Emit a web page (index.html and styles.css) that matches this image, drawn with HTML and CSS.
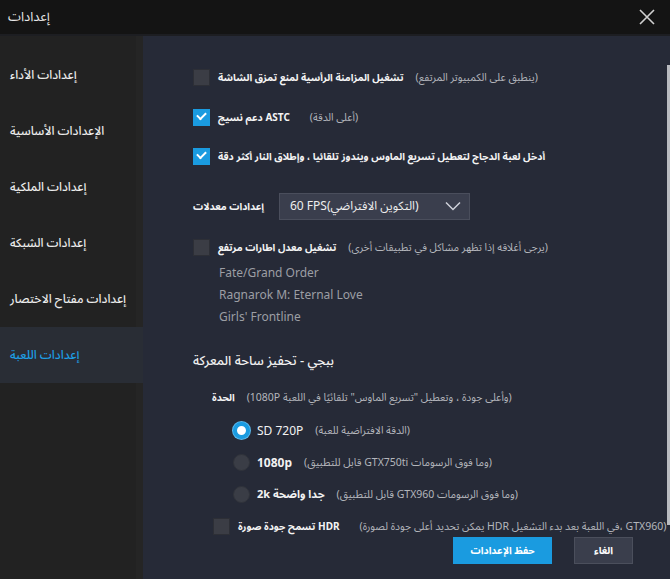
FILE: index.html
```html
<!DOCTYPE html>
<html lang="ar">
<head>
    <meta charset="UTF-8">
    <title>إعدادات</title>
    <link rel="stylesheet" href="styles.css">
</head>
<body>
    <div id="window">
        <div id="titlebar">
            <span class="title">إعدادات</span>
            <svg class="close" width="16" height="16" viewBox="0 0 16 16">
                <path d="M1 1 L15 15 M15 1 L1 15" stroke="#d0d0d0" stroke-width="1.6" fill="none"/>
            </svg>
        </div>

        <div id="body">
            <div id="sidebar">
                <div class="nav-item">إعدادات الأداء</div>
                <div class="nav-item">الإعدادات الأساسية</div>
                <div class="nav-item">إعدادات الملكية</div>
                <div class="nav-item">إعدادات الشبكة</div>
                <div class="nav-item">إعدادات مفتاح الاختصار</div>
                <div class="nav-item active">إعدادات اللعبة</div>
            </div>

            <div id="content">
                <div class="row row-vsync">
                    <span class="check"></span>
                    <span class="label ar">تشغيل المزامنة الرأسية لمنع تمزق الشاشة</span>
                    <span class="note ar">(ينطبق على الكمبيوتر المرتفع)</span>
                </div>

                <div class="row row-astc">
                    <span class="check on"></span>
                    <span class="label ar">ASTC دعم نسيج</span>
                    <span class="note ar wide">(أعلى الدقة)</span>
                </div>

                <div class="row row-mouse">
                    <span class="check on"></span>
                    <span class="label ar">أدخل لعبة الدجاج لتعطيل تسريع الماوس ويندوز تلقائيا ، وإطلاق النار أكثر دقة</span>
                </div>

                <div class="row row-fps">
                    <span class="label ar">إعدادات معدلات</span>
                    <div class="select">
                        <span>60 FPS(التكوين الافتراضي)</span>
                        <svg width="16" height="10" viewBox="0 0 16 10">
                            <path d="M1 1.5 L8 8.5 L15 1.5" stroke="#cfd2da" stroke-width="1.5" fill="none"/>
                        </svg>
                    </div>
                </div>

                <div class="row row-hfr">
                    <span class="check"></span>
                    <span class="label ar">تشغيل معدل اطارات مرتفع</span>
                    <span class="note ar">(يرجى أغلاقه إذا تظهر مشاكل في تطبيقات أخرى)</span>
                </div>

                <ul class="games">
                    <li>Fate/Grand Order</li>
                    <li>Ragnarok M: Eternal Love</li>
                    <li>Girls' Frontline</li>
                </ul>

                <div class="section-title ar">ببجي - تحفيز ساحة المعركة</div>

                <div class="row row-sharp">
                    <span class="label ar">الحدة</span>
                    <span class="note ar">(وأعلى جودة ، وتعطيل "تسريع الماوس" تلقائيًا في اللعبة 1080P)</span>
                </div>

                <div class="row radio-row first">
                    <span class="radio on"></span>
                    <span class="opt">SD 720P</span>
                    <span class="note ar">(الدقة الافتراضية للعبة)</span>
                </div>

                <div class="row radio-row">
                    <span class="radio"></span>
                    <span class="opt bold">1080p</span>
                    <span class="note ar">(وما فوق الرسومات GTX750ti قابل للتطبيق)</span>
                </div>

                <div class="row radio-row">
                    <span class="radio"></span>
                    <span class="opt bold ar">جدا واضحة 2k</span>
                    <span class="note ar">(وما فوق الرسومات GTX960 قابل للتطبيق)</span>
                </div>

                <div class="row row-hdr">
                    <span class="check"></span>
                    <span class="label ar">HDR تسمح جودة صورة</span>
                    <span class="note ar wide">(GTX960 ،في اللعبة بعد بدء التشغيل HDR يمكن تحديد أعلى جودة لصورة)</span>
                </div>

                <div class="buttons">
                    <button class="btn primary">حفظ الإعدادات</button>
                    <button class="btn">الغاء</button>
                </div>

                <div class="scroll-thumb"></div>
            </div>
        </div>
    </div>
</body>
</html>
```

FILE: styles.css
```css
body {
    margin: 0;
    padding: 0;
    background-color: #262a37;
    font-family: "Noto Sans", "Noto Sans Arabic", "DejaVu Sans", sans-serif;
    color: #fff;
}

#window {
    width: 670px;
    height: 579px;
    overflow: hidden;
    display: flex;
    flex-direction: column;
}

#titlebar {
    height: 34px;
    background-color: #141414;
    border-bottom: 2px solid #1d1e22;
    display: flex;
    align-items: center;
    justify-content: space-between;
    padding: 0 15px 0 8px;
    flex-shrink: 0;
}

#titlebar .title {
    font-size: 13px;
    color: #e8e8e8;
}

#body {
    flex: 1;
    display: flex;
    min-height: 0;
}

#sidebar {
    width: 143px;
    background: linear-gradient(to right, #222222 136px, #252525 136px);
    padding-top: 11px;
    flex-shrink: 0;
}

.nav-item {
    height: 56px;
    line-height: 56px;
    padding-left: 10px;
    font-size: 12px;
    font-weight: 500;
    color: #ececec;
    white-space: nowrap;
}

.nav-item.active {
    background-color: #292d35;
    color: #1e9fe6;
}

#content {
    flex: 1;
    position: relative;
    padding: 33px 0 0 50px;
    overflow: hidden;
}

.row {
    display: flex;
    align-items: center;
    height: 17px;
    white-space: nowrap;
}

.ar {
    direction: rtl;
    unicode-bidi: isolate;
}

.label {
    font-size: 10px;
    font-weight: bold;
    color: #f4f4f4;
    margin-left: 8px;
}

.note {
    font-size: 10.5px;
    color: #b4b6bc;
    margin-left: 12px;
}

.note.wide { margin-left: 20px; }

.check {
    width: 15px;
    height: 15px;
    background-color: #3b3d45;
    border: 1px solid #2d2f36;
    flex-shrink: 0;
    position: relative;
}

.check.on {
    background-color: #1a9be0;
    border-color: #1a9be0;
}

.check.on::after {
    content: "";
    position: absolute;
    left: 3px;
    top: 2px;
    width: 7px;
    height: 4px;
    border-left: 2px solid #fff;
    border-bottom: 2px solid #fff;
    transform: rotate(-45deg);
}

.row-astc { margin-top: 23px; }
.row-mouse { margin-top: 22px; }
.row-fps { margin-top: 28px; height: 26px; }
.row-fps .label { margin-left: 0; width: 86px; text-align: left; }
.row-hfr { margin-top: 20px; }

.select {
    width: 191px;
    height: 27px;
    background-color: #3a3e4d;
    border: 1px solid #4a4e5c;
    display: flex;
    align-items: center;
    justify-content: space-between;
    padding: 0 8px 0 10px;
    font-size: 12px;
    color: #eee;
    box-sizing: border-box;
}

.games {
    list-style: none;
    margin: 6px 0 0 26px;
    padding: 0;
}

.games li {
    line-height: 22px;
    font-size: 12px;
    color: #9c9ea4;
}

.section-title {
    margin-top: 23px;
    font-size: 13px;
    font-weight: 500;
    color: #f0f0f0;
    line-height: 18px;
    width: fit-content;
}

.row-sharp {
    margin-top: 20px;
    padding-left: 19px;
}

.row-sharp .label { margin-left: 0; }

.radio-row {
    margin-top: 15px;
    padding-left: 40px;
}

.radio-row.first { margin-top: 16px; }

.radio {
    width: 17px;
    height: 17px;
    border-radius: 50%;
    background-color: #3a3d46;
    border: 1px solid #30333b;
    box-sizing: border-box;
    flex-shrink: 0;
}

.radio.on {
    background-color: #fff;
    border: 4px solid #1a9be0;
    box-shadow: 0 0 0 1px #5ab8ec;
}

.opt {
    font-size: 12px;
    color: #f2f2f2;
    margin-left: 7px;
}

.opt.bold { font-weight: bold; }
.opt.ar { font-size: 11px; }

.row-hdr {
    margin-top: 15px;
    padding-left: 20px;
}

.buttons {
    display: flex;
    gap: 22px;
    margin: 2px 0 0 260px;
}

.btn {
    height: 27px;
    width: 59px;
    font-family: inherit;
    font-size: 10px;
    font-weight: bold;
    color: #fff;
    background-color: #3a3e4c;
    border: 1px solid #4b4f5c;
    padding: 0;
}

.btn.primary {
    width: 99px;
    background-color: #1a9be0;
    border-color: #1a9be0;
}

.scroll-thumb {
    position: absolute;
    right: 0;
    top: 29px;
    width: 3px;
    height: 460px;
    background-color: #b9bbc0;
}
```
